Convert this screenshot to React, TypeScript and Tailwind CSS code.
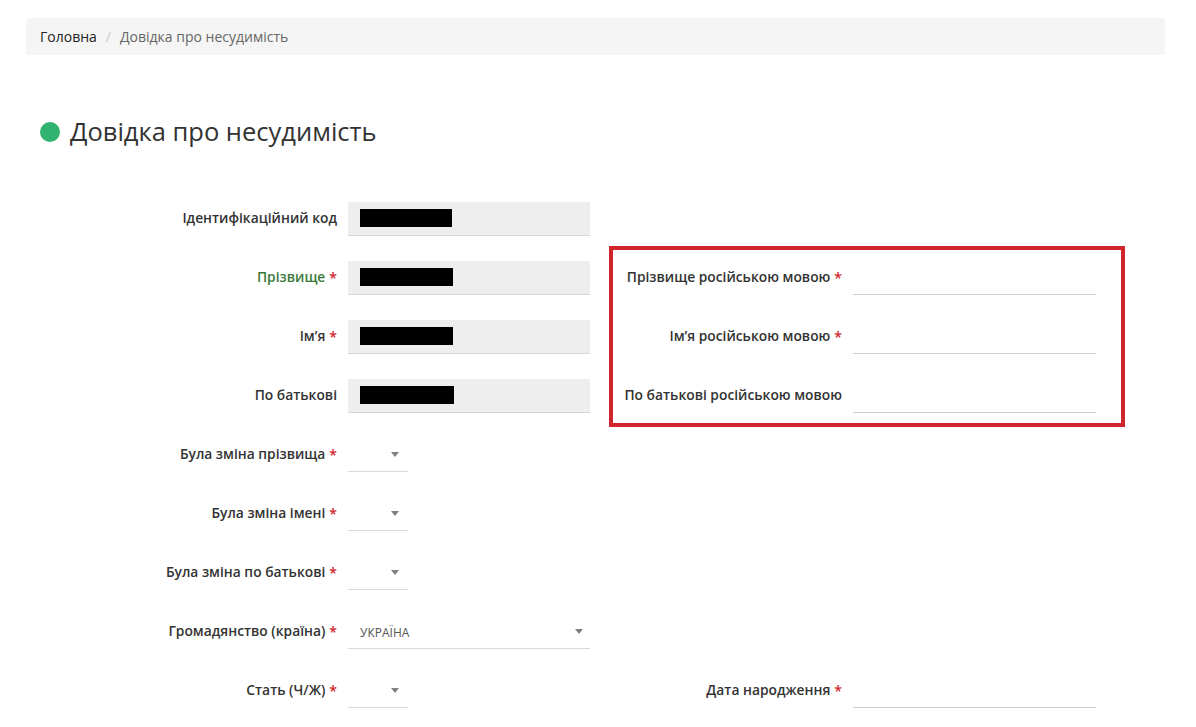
import React from "react";

const Star = () => <span className="ml-[4px] text-[#d0252d] text-[14px]">*</span>;

const Arrow = () => (
  <svg width="8" height="5" viewBox="0 0 8 5" className="shrink-0">
    <path d="M0 0 L8 0 L4 5 Z" fill="#808080" />
  </svg>
);

function Label({ text, req, green }: { text: string; req?: boolean; green?: boolean }) {
  return (
    <div className={`flex items-center justify-end text-[13.8px] font-semibold ${green ? "text-[#3c7a3c]" : "text-[#333]"}`}>
      <span>{text}</span>
      {req && <Star />}
    </div>
  );
}

function GrayInput({ w = 92 }: { w?: number }) {
  return (
    <div className="h-[34px] bg-[#eeeeee] border-b border-[#d6d6d6] flex items-center pl-[12px]">
      <div className="h-[18px] bg-black" style={{ width: w }} />
    </div>
  );
}

function SmallSelect() {
  return (
    <div className="h-[34px] w-[60px] border-b border-[#d9d9d9] flex items-center justify-end pr-[9px]">
      <Arrow />
    </div>
  );
}

function LineInput() {
  return <div className="h-[34px] border-b border-[#d0d0d0]" />;
}

export default function App() {
  return (
    <div className="min-h-[727px] w-[1196px] bg-white font-['Open_Sans','Noto_Sans',sans-serif] relative overflow-hidden">
      <div className="px-[26px] pt-[18px]">
        <div className="h-[37px] w-[1139px] bg-[#f5f5f5] rounded-[2px] flex items-center px-[14px] text-[14px]">
          <span className="text-[#222]">Головна</span>
          <span className="mx-[9px] text-[#ccc]">/</span>
          <span className="text-[#666]">Довідка про несудимість</span>
        </div>
      </div>

      <div className="flex items-center pl-[40px] mt-[58px] h-[38px]">
        <div className="w-[20px] h-[20px] rounded-full bg-[#2fb36f]" />
        <h1 className="ml-[10px] text-[25.5px] text-[#333] font-normal leading-none">Довідка про несудимість</h1>
      </div>

      <div className="mt-[38px] pl-[26px] grid grid-cols-[311px_242px_241px_243px] gap-x-[11px] auto-rows-[59px] items-center">
        <Label text="Ідентифікаційний код" />
        <GrayInput />
        <div />
        <div />

        <Label text="Прізвище" req green />
        <GrayInput w={93} />
        <Label text="Прізвище російською мовою" req />
        <LineInput />

        <Label text="Ім’я" req />
        <GrayInput w={93} />
        <Label text="Ім’я російською мовою" req />
        <LineInput />

        <Label text="По батькові" />
        <GrayInput w={94} />
        <Label text="По батькові російською мовою" />
        <LineInput />

        <Label text="Була зміна прізвища" req />
        <SmallSelect />
        <div />
        <div />

        <Label text="Була зміна імені" req />
        <SmallSelect />
        <div />
        <div />

        <Label text="Була зміна по батькові" req />
        <SmallSelect />
        <div />
        <div />

        <Label text="Громадянство (країна)" req />
        <div className="h-[34px] border-b border-[#d9d9d9] flex items-center justify-between pl-[12px] pr-[7px]">
          <span className="text-[12px] text-[#555] pt-[3px]">УКРАЇНА</span>
          <Arrow />
        </div>
        <div />
        <div />

        <Label text="Стать (Ч/Ж)" req />
        <SmallSelect />
        <Label text="Дата народження" req />
        <LineInput />
      </div>

      <div className="absolute left-[609px] top-[246px] w-[516px] h-[181px] border-[4px] border-[#d0252d] pointer-events-none" />
    </div>
  );
}
